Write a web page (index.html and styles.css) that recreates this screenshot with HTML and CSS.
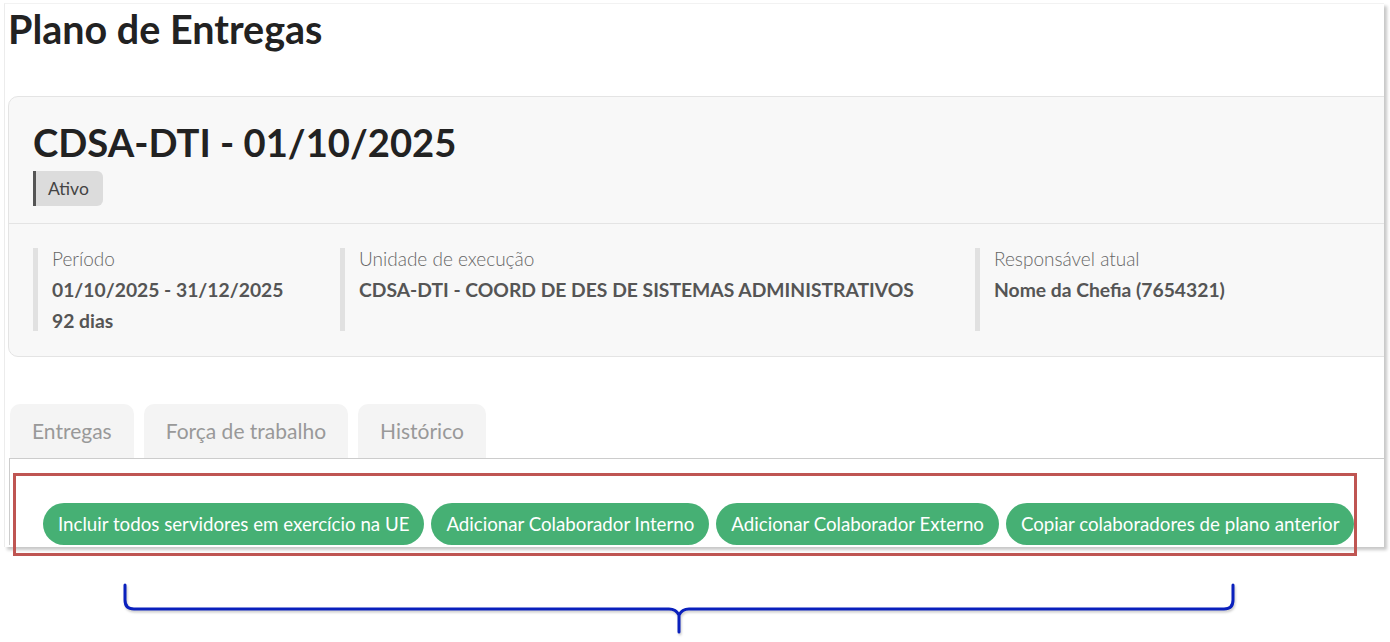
FILE: index.html
```html
<!DOCTYPE html>
<html lang="pt-BR">
<head>
  <meta charset="UTF-8" />
  <meta name="viewport" content="width=device-width, initial-scale=1.0"/>
  <title>Plano de Entregas</title>
  <link rel="stylesheet" href="styles.css">
</head>
<body>

  <div class="sheet">
    <div class="frame">
      <h1 class="page-title">Plano de Entregas</h1>

      <div class="card">
        <div class="card-header">
          <h2 class="plan-title">CDSA-DTI - 01/10/2025</h2>
          <span class="badge">Ativo</span>
        </div>
        <div class="card-body">
          <div class="info">
            <div class="info-label">Período</div>
            <div class="info-value">01/10/2025 - 31/12/2025</div>
            <div class="info-value">92 dias</div>
          </div>
          <div class="info">
            <div class="info-label">Unidade de execução</div>
            <div class="info-value">CDSA-DTI - COORD DE DES DE SISTEMAS ADMINISTRATIVOS</div>
          </div>
          <div class="info">
            <div class="info-label">Responsável atual</div>
            <div class="info-value">Nome da Chefia (7654321)</div>
          </div>
        </div>
      </div>

      <div class="tabs">
        <div class="tab">Entregas</div>
        <div class="tab">Força de trabalho</div>
        <div class="tab">Histórico</div>
      </div>

      <div class="tab-panel">
        <div class="actions">
          <button class="btn">Incluir todos servidores em exercício na UE</button>
          <button class="btn">Adicionar Colaborador Interno</button>
          <button class="btn">Adicionar Colaborador Externo</button>
          <button class="btn">Copiar colaboradores de plano anterior</button>
        </div>
      </div>
    </div>

    <!-- annotations drawn over the screenshot -->
    <div class="highlight"></div>
    <svg class="brace" width="1120" height="52" viewBox="0 0 1120 52">
      <path d="M2 2 V17 Q2 26 11 26 H546 Q553 26 556 32 Q559 26 566 26 H1101 Q1110 26 1110 17 V2 M556 32 V49"
            fill="none" stroke="#0a20bd" stroke-width="3" stroke-linecap="round" stroke-linejoin="round"/>
    </svg>
  </div>

</body>
</html>
```

FILE: styles.css
```css
body {
  margin: 0;
  background: #fff;
  font-family: 'Lato', 'Open Sans', sans-serif;
  overflow: hidden;
}

.sheet {
  position: relative;
  width: 1390px;
  height: 642px;
}

.frame {
  position: relative;
  top: 3px;
  left: 4px;
  width: 1379px;
  height: 543px;
  background: #fff;
  border-left: 1px solid #ececec;
  border-top: 1px solid #f2f2f2;
  box-shadow: 3px 3px 3px rgba(0,0,0,0.22);
  overflow: hidden;
}

.page-title {
  margin: 2px 0 0 3px;
  font-size: 39.5px;
  line-height: 46px;
  font-weight: 700;
  color: #222;
}

.card {
  margin: 44px -20px 0 3px;
  background: #f8f8f8;
  border: 1px solid #e4e4e4;
  border-radius: 10px;
}

.card-header {
  padding: 22px 24px 17px;
  border-bottom: 1px solid #e4e4e4;
}

.plan-title {
  margin: 0 0 6px;
  font-size: 38.2px;
  line-height: 46px;
  font-weight: 700;
  color: #222;
}

.badge {
  display: inline-block;
  height: 35px;
  line-height: 35px;
  padding: 0 14px 0 12px;
  background: #dcdcdc;
  border-left: 3px solid #555;
  border-radius: 0 6px 6px 0;
  font-size: 17.5px;
  color: #444;
}

.card-body {
  display: grid;
  grid-template-columns: 307px 635px 1fr;
  padding: 24px 24px 25px;
}

.info {
  border-left: 5px solid #e1e1e1;
  padding-left: 14px;
  display: flex;
  flex-direction: column;
  gap: 10px;
  min-height: 83px;
  box-sizing: border-box;
}

.info-label {
  font-size: 19px;
  line-height: 21px;
  font-weight: 300;
  color: #666;
}

.info-value {
  font-size: 19.3px;
  line-height: 21px;
  font-weight: 700;
  color: #555;
}

.tabs {
  display: flex;
  gap: 10px;
  margin: 47px 0 0 5px;
}

.tab {
  height: 54px;
  line-height: 54px;
  padding: 0 22px;
  background: #f4f4f4;
  border-radius: 10px 10px 0 0;
  font-size: 21px;
  color: #999;
}

.tab-panel {
  margin-left: 4px;
  border-top: 1px solid #ccc;
  border-left: 1px solid #ccc;
  padding: 44px 0 0 33px;
}

.actions {
  display: flex;
  gap: 7px;
}

.btn {
  height: 42px;
  padding: 0 15px;
  background: #46b074;
  color: #fff;
  border: none;
  border-radius: 21px;
  font-family: 'Lato', sans-serif;
  font-size: 18.7px;
  white-space: nowrap;
}

.highlight {
  position: absolute;
  left: 13px;
  top: 473px;
  width: 1338px;
  height: 77px;
  border: 3px solid #bf5552;
}

.brace {
  position: absolute;
  left: 123px;
  top: 583px;
  filter: drop-shadow(1px 2px 1px rgba(0,0,0,0.2));
}
```
